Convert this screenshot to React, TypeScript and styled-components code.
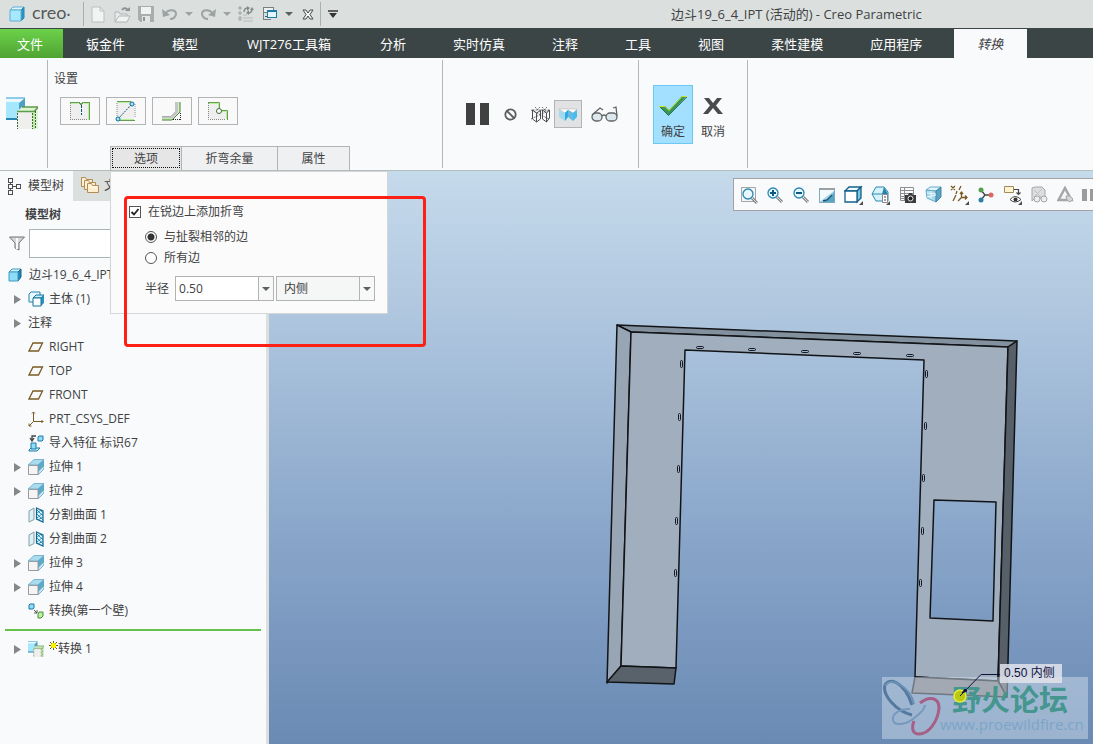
import React from "react";
import styled, { createGlobalStyle, css } from "styled-components";

const font = `"Open Sans", "Noto Sans CJK SC", sans-serif`;

const GlobalStyle = createGlobalStyle`
  * { box-sizing: border-box; }
  body {
    margin: 0;
    font-family: ${font};
    font-size: 12px;
    line-height: 20px;
    color: #3f4142;
    background: #f8fafc;
  }
  button, input, select {
    font: inherit;
    color: inherit;
    margin: 0;
    padding: 0;
    border-radius: 0;
  }
  svg { display: block; flex: none; }
`;

/* ---------- frame ---------- */

const Window = styled.div`
  min-height: 100vh;
  display: flex;
  flex-direction: column;
  overflow: hidden;
`;

const TitleBar = styled.header`
  height: 28px;
  display: flex;
  align-items: center;
  background: #dbe0df;
  padding-left: 9px;
`;

const Brand = styled.div`
  width: 74px;
  display: flex;
  align-items: center;
  gap: 7px;
  font-family: Lato, sans-serif;
  font-size: 18px;
  color: #55595a;
`;

const BrandName = styled.span`
  margin-top: -4px;
`;

const BarRule = styled.span`
  width: 1px;
  height: 24px;
  background: #a9b0af;
`;

const QuickTools = styled.div`
  display: flex;
  align-items: center;
  padding-left: 2px;
`;

const QuickButton = styled.button<{ $narrow?: boolean }>`
  width: ${(p) => (p.$narrow ? 14 : 24)}px;
  height: 24px;
  display: flex;
  align-items: center;
  justify-content: center;
  border: 0;
  background: none;
`;

const Title = styled.h1`
  flex: 1;
  margin: 0;
  padding-left: 326px;
  font-size: 13px;
  font-weight: 400;
  white-space: nowrap;
`;

const MenuBar = styled.nav`
  height: 30px;
  display: flex;
  padding-top: 1px;
  background: #3c4546;
`;

const MenuTab = styled.button<{ $kind?: "file" | "active"; $wide?: boolean }>`
  border: 0;
  min-width: ${(p) => (p.$wide ? 135 : 0)}px;
  padding: 0 24px 0 23px;
  font-size: 13px;
  white-space: nowrap;
  color: #fff;
  background: none;
  ${(p) =>
    p.$kind === "file" &&
    css`
      padding: 0 20px 0 17px;
      background: linear-gradient(#6cd14a, #4fa432);
    `}
  ${(p) =>
    p.$kind === "active" &&
    css`
      margin-left: 8px;
      color: #3f4142;
      font-style: italic;
      background: #f8fafc;
    `}
`;

/* ---------- ribbon ---------- */

const Ribbon = styled.section`
  height: 113px;
  display: flex;
  background: #f8fafc;
  border-bottom: 1px solid #b3bdbc;
`;

const RibbonRule = styled.span`
  width: 1px;
  margin: 2px 0;
  background: #b2b7b8;
`;

const FeatureCell = styled.div`
  width: 47px;
  padding: 39px 0 0 6px;
`;

const Settings = styled.div`
  width: 394px;
  display: flex;
  flex-direction: column;
  padding-top: 11px;
`;

const GroupLabel = styled.div`
  padding-left: 6px;
`;

const ModeButtons = styled.div`
  display: flex;
  gap: 6px;
  padding: 8px 0 0 12px;
`;

const ModeButton = styled.button`
  width: 40px;
  height: 28px;
  display: flex;
  align-items: center;
  justify-content: center;
  border: 1px solid #b3b3b3;
  background: #f9f9f9;
`;

const SubTabs = styled.div`
  position: relative;
  display: flex;
  height: 24px;
  margin: auto 0 0 62px;
`;

const SubTab = styled.button<{ $on?: boolean; $wide?: boolean }>`
  width: ${(p) => (p.$wide ? 96 : 72)}px;
  border: 1px solid #b3b3b3;
  border-bottom: 0;
  border-left-width: ${(p) => (p.$on ? 1 : 0)}px;
  background: ${(p) => (p.$on ? "#e6e6e7" : "#eff0f1")};
  outline: ${(p) => (p.$on ? "1px dotted #111" : "none")};
  outline-offset: -3px;
`;

const Controls = styled.div<{ $wide?: boolean }>`
  width: ${(p) => (p.$wide ? 195 : 108)}px;
  display: flex;
  align-items: center;
  padding-left: ${(p) => (p.$wide ? 20 : 14)}px;
`;

const ControlButton = styled.button<{ $on?: boolean; $w: number }>`
  width: ${(p) => p.$w}px;
  height: 28px;
  display: flex;
  align-items: center;
  justify-content: center;
  border: 1px solid ${(p) => (p.$on ? "#b3b3b3" : "transparent")};
  background: ${(p) => (p.$on ? "#e1e2e3" : "none")};
`;

const ActionButton = styled.button<{ $on?: boolean }>`
  width: 40px;
  height: 59px;
  display: flex;
  flex-direction: column;
  align-items: center;
  padding-top: 6px;
  gap: 2px;
  border: 1px solid ${(p) => (p.$on ? "#6cc8f5" : "transparent")};
  background: ${(p) => (p.$on ? "#a3dfff" : "none")};
`;

const ActionArt = styled.span`
  height: 28px;
  display: flex;
  align-items: center;
`;

/* ---------- options panel ---------- */

const OptionsPanel = styled.form`
  position: absolute;
  z-index: 2;
  top: 25px;
  left: 0;
  width: 278px;
  padding: 28px 0 12px 18px;
  border: 1px solid #d2d6d6;
  background: #fbfbfb;
`;

const Choice = styled.label<{ $nested?: boolean }>`
  height: ${(p) => (p.$nested ? 21 : 24)}px;
  margin-bottom: ${(p) => (p.$nested ? 0 : 2)}px;
  padding-left: ${(p) => (p.$nested ? 16 : 0)}px;
  display: flex;
  align-items: center;
  gap: 7px;
`;

const Tick = styled.input`
  appearance: none;
  width: 12px;
  height: 12px;
  border: 1px solid #555;
  background: #fff;
  &:checked {
    background: #fff
      url("data:image/svg+xml,%3Csvg xmlns='http://www.w3.org/2000/svg' viewBox='0 0 10 10'%3E%3Cpath d='M1.5 5l2.5 2.5L8.500 2' fill='none' stroke='%23222' stroke-width='1.800'/%3E%3C/svg%3E");
  }
`;

const Radio = styled.input`
  appearance: none;
  width: 12px;
  height: 12px;
  border: 1px solid #555;
  border-radius: 50%;
  background: #fff;
  &:checked {
    background: radial-gradient(circle, #333 3px, #fff 4px);
  }
`;

const RadiusRow = styled.div`
  display: flex;
  align-items: center;
  padding: 8px 0 0 16px;
`;

const Combo = styled.div<{ $flat?: boolean }>`
  position: relative;
  display: flex;
  width: 99px;
  height: 25px;
  margin-left: ${(p) => (p.$flat ? 2 : 6)}px;
  border: 1px solid #b3b3b3;
  background: ${(p) => (p.$flat ? "#f5f6f6" : "#fff")};
`;

const ComboInput = styled.input`
  flex: 1;
  min-width: 0;
  border: 0;
  padding-left: 3px;
  background: none;
`;

const ComboSelect = styled.select`
  appearance: none;
  flex: 1;
  border: 0;
  padding-left: 7px;
  background: none;
`;

const ComboArrow = styled.button`
  width: 15px;
  display: flex;
  align-items: center;
  justify-content: center;
  border: 0;
  border-left: 1px solid #b3b3b3;
  background: #f7f8f8;
  pointer-events: none;
`;

const RedMark = styled.div`
  position: absolute;
  z-index: 3;
  top: 50px;
  left: 14px;
  width: 302px;
  height: 151px;
  border: 3px solid #ff2015;
  border-radius: 4px;
  pointer-events: none;
`;

/* ---------- model tree ---------- */

const Body = styled.main`
  flex: 1;
  display: flex;
`;

const Side = styled.aside`
  width: 269px;
  flex: none;
  border-right: 3px solid #dbe0df;
  background: #f8fafc;
`;

const SideTabs = styled.div`
  display: flex;
  height: 30px;
`;

const SideTab = styled.button<{ $on?: boolean }>`
  flex: ${(p) => (p.$on ? "0 0 73px" : "1")};
  display: flex;
  align-items: center;
  gap: 4px;
  padding-left: 7px;
  border: 0;
  white-space: nowrap;
  background: ${(p) => (p.$on ? "none" : "#dbe0df")};
`;

const SideTitle = styled.h2`
  margin: 0;
  padding: 4px 0 4px 25px;
  font-size: 12px;
  line-height: 20px;
  font-weight: 700;
`;

const FilterRow = styled.div`
  display: flex;
  align-items: center;
  gap: 4px;
  padding: 0 8px 5px 9px;
`;

const FilterInput = styled.input`
  flex: 1;
  height: 29px;
  border: 1px solid #a9b5b4;
  background: #fff;
`;

const Tree = styled.ul`
  list-style: none;
  margin: 0;
  padding: 0;
`;

const TreeRow = styled.li<{ $level: number }>`
  height: 24px;
  display: flex;
  align-items: center;
  padding-left: ${(p) => (p.$level === 0 ? 8 : 13)}px;
  white-space: nowrap;
`;

const Twisty = styled.span`
  width: 15px;
  height: 16px;
  display: flex;
  align-items: center;
`;

const TreeIcon = styled.span`
  width: 16px;
  margin-right: 5px;
`;

const Badge = styled.span`
  padding-bottom: 7px;
`;

const InsertLine = styled.hr`
  height: 2px;
  margin: 6px 5px;
  border: 0;
  background: #66c04c;
`;

/* ---------- graphics area ---------- */

const Canvas = styled.section`
  position: relative;
  flex: 1;
  min-width: 0;
  overflow: hidden;
  background: linear-gradient(#c5daeb 0%, #b0c7df 24%, #8da9cc 59%, #6a8ab4 100%);
`;

const ViewBar = styled.div`
  position: relative;
  z-index: 1;
  width: 360px;
  height: 33px;
  margin: 7px 0 0 auto;
  display: flex;
  align-items: center;
  padding-left: 2px;
  border: 1px solid #a3a3a3;
  border-right: 0;
  background: #f8fafc;
  overflow: hidden;
`;

const ViewButton = styled.button<{ $menu?: boolean }>`
  flex: none;
  width: ${(p) => (p.$menu ? 27 : 26)}px;
  height: 26px;
  display: flex;
  align-items: center;
  justify-content: center;
  border: 0;
  background: none;
`;

const ModelDrawing = styled.svg`
  position: absolute;
  left: 0;
  top: 0;
`;

const Leader = styled.svg`
  position: absolute;
  z-index: 2;
  left: 683px;
  top: 499px;
`;

const Note = styled.div`
  position: absolute;
  z-index: 2;
  left: 731px;
  top: 493px;
  width: 62px;
  height: 19px;
  padding-left: 4px;
  font-family: "Liberation Sans", "Noto Sans CJK SC", sans-serif;
  line-height: 19px;
  white-space: nowrap;
  color: #10103c;
  background: rgba(226, 228, 236, 0.85);
`;

const Watermark = styled.div`
  position: absolute;
  z-index: 1;
  left: 613px;
  top: 506px;
  width: 206px;
  height: 62px;
  display: flex;
  color: #7ba5c8;
  background: rgba(206, 219, 234, 0.5);
`;

const WatermarkText = styled.div`
  display: flex;
  flex-direction: column;
  padding-top: 7px;
  font-size: 15px;
  line-height: 24px;
  white-space: nowrap;
  margin-left: -4px;
`;

const WatermarkName = styled.strong`
  padding-left: 12px;
  font-family: "Noto Sans CJK SC", sans-serif;
  font-size: 29px;
  line-height: 28px;
  color: #44968f;
`;

/* ---------- icons ---------- */

type Kids = { w: number; h?: number; children: React.ReactNode; crisp?: boolean };

const Svg = ({ w, h = w, children, crisp }: Kids) => (
  <svg
    width={w}
    height={h}
    viewBox={`0 0 ${w} ${h}`}
    fill="none"
    shapeRendering={crisp ? "crispEdges" : undefined}
    aria-hidden="true"
  >
    {children}
  </svg>
);

const Caret = ({ color = "#5b5f60" }: { color?: string }) => (
  <Svg w={8} h={4}><path d="M0 0h8L4 4z" fill={color} /></Svg>
);

const BrandCube = () => (
  <Svg w={16}>
    <path d="M1 4l3-3h11l-3 3z" fill="#dff6ff" stroke="#5fb0d3" />
    <path d="M12 4l3-3v11l-3 3z" fill="#2d93c0" stroke="#2a87b4" />
    <path d="M1 4h11v11H1z" fill="#a8e8ff" stroke="#5fb0d3" />
  </Svg>
);

const PartCube = () => (
  <Svg w={14}>
    <path d="M1 4l3-3h9l-3 3z" fill="#d7f3fd" stroke="#3f9cc4" />
    <path d="M10 4l3-3v8l-3 4z" fill="#2489b5" stroke="#14618a" />
    <path d="M1 4h9v9H1z" fill="#8fdcf8" stroke="#3f9cc4" />
  </Svg>
);

const NewIcon = () => (
  <Svg w={14} h={17}>
    <path d="M1 1h8l4 4v11H1z" fill="#f2f3f3" stroke="#bcc0c0" />
    <path d="M9 1v4h4" stroke="#bcc0c0" />
  </Svg>
);

const OpenIcon = () => (
  <Svg w={17} h={17}>
    <path d="M1 16V6h4l1 2h7v2" fill="#e8eaea" stroke="#b1b6b6" />
    <path d="M1 16l4-6h11l-3 6z" fill="#f1f2f2" stroke="#b1b6b6" />
    <path d="M8 4c2-3 5-2 6 1" stroke="#8e9494" strokeWidth="2" />
    <path d="M11 5h5V1z" fill="#8e9494" />
  </Svg>
);

const SaveIcon = () => (
  <Svg w={16} crisp>
    <path d="M0 0h16v16H2l-2-2z" fill="#a9adad" />
    <path d="M3 1h10v7H3z" fill="#f1f2f2" />
    <path d="M4 10h8v6H4z" fill="#e3e5e5" />
    <path d="M5 11h2v4H5z" fill="#8f9494" />
  </Svg>
);

const UndoIcon = ({ flip }: { flip?: boolean }) => (
  <Svg w={16} h={14}>
    <g transform={flip ? "translate(16 0) scale(-1 1)" : undefined}>
      <path d="M3 7c3-5 11-5 11 0 0 3-3 5-6 5" stroke="#9da2a2" strokeWidth="2" />
      <path d="M0 2l1 8 7-2z" fill="#9da2a2" />
    </g>
  </Svg>
);

const RegenIcon = () => (
  <Svg w={16}>
    <path d="M1 1h2v2H1zM1 6h2v2H1zM1 11h2v3H1z" stroke="#9da2a2" />
    <path d="M5 9h4M5 12h10M5 15h10" stroke="#b7bbbb" />
    <path d="M6 6c0-3 1-4 4-4M14 3c0 3-1 4-4 4" stroke="#858b8b" strokeWidth="1.500" />
    <path d="M9 0l3 2-3 3zM11 4l-3 3 3 2zM12 4l2-3 2 3z" fill="#858b8b" />
  </Svg>
);

const WindowsIcon = () => (
  <Svg w={16} crisp>
    <path d="M1.500 1.500h10v5h-10z" fill="#eef0f0" stroke="#7b7f80" />
    <path d="M1.500 7v6.500h7" stroke="#7b7f80" />
    <path d="M5.500 4.500h9v7h-9z" fill="#e4f6ff" stroke="#1c7ba8" />
    <path d="M5 5h10" stroke="#1c7ba8" strokeWidth="2" />
    <path d="M3 10.500h2" stroke="#55595a" />
  </Svg>
);

const CloseBoxIcon = () => (
  <Svg w={12} h={11}>
    <path d="M1 1h3l2 3 2-3h3L8 5.500 11 10H8L6 7l-2 3H1l3-4.500z" fill="#f3f4f4" stroke="#444a4b" />
  </Svg>
);

const CustomizeIcon = () => (
  <Svg w={10} h={8}>
    <path d="M0 1h10" stroke="#333" strokeWidth="1.500" />
    <path d="M1 3h8L5 8z" fill="#333" />
  </Svg>
);

const ConvertIcon = ({ size = 32 }: { size?: number }) => (
  <svg width={size} height={size} viewBox="0 0 32 32" fill="none" aria-hidden="true">
    <path d="M0 5l2-4h17l-6 5H0z" fill="#eaf9ff" />
    <path d="M0 1h19" stroke="#8ecbe6" strokeWidth="2" />
    <path d="M0 5h13v17H0z" fill="#a5e7fd" />
    <path d="M13 6l6-5v10l-6 6z" fill="#4d9fc6" />
    <path d="M0 22h12" stroke="#2585b3" strokeWidth="2" />
    <path d="M11 15l5-5h16v22H11z" fill="#efefed" />
    <path d="M11 15l5-5h16v1l-4 3H11z" fill="#ddf5d0" />
    <path d="M27 15l5-4v21h-5z" fill="#e3f3da" />
    <path d="M16 10h16M11 14.500h17l4-4" stroke="#5c9a4c" strokeWidth="1.500" />
    <path d="M28 15v17" stroke="#a4ec80" strokeWidth="1.500" />
    <path d="M11.500 16v16M26.500 16v16M29.500 14v18" stroke="#46633d" strokeDasharray="2 1" />
  </svg>
);

const RipEdgeIcon = () => (
  <Svg w={22} h={20} crisp>
    <path d="M1 2h19v17H1z" fill="#eeefee" />
    <path d="M1.500 2v16.500h17" stroke="#888" strokeDasharray="1 1" />
    <path d="M1 1.500h9l2 2 2-2h6.500V19" stroke="#679b57" />
    <path d="M2 2.500h7M15 2.500h4.500V19" stroke="#b4f09a" />
    <path d="M12.500 4v10" stroke="#11556f" strokeDasharray="3 1" />
  </Svg>
);

const RipConnectIcon = () => (
  <Svg w={22} h={22}>
    <path d="M2 2h17v17H2z" fill="#eeefee" />
    <path d="M2 3v14M20 4v14" stroke="#888" strokeDasharray="1 1" />
    <path d="M2 1.500h14M4 20.500h16" stroke="#679b57" />
    <path d="M3 2.500h12M5 19.500h14" stroke="#b4f09a" />
    <path d="M3 19L16 5" stroke="#11556f" strokeDasharray="2 1" />
    <circle cx="17" cy="4" r="2" fill="#a7e5ff" stroke="#136b93" />
    <circle cx="3" cy="19" r="2" fill="#a7e5ff" stroke="#136b93" />
  </Svg>
);

const EdgeBendIcon = () => (
  <Svg w={20} h={20}>
    <path d="M0 15.500h9l5-5V1" stroke="#8d8e8e" />
    <path d="M0 16.500h10l5-5V1" stroke="#c4c5c5" strokeWidth="2" />
    <path d="M0 18h11l6-6V1" stroke="#a4e985" />
    <path d="M18 1v10l-8 8H0" stroke="#4b7c3b" />
    <path d="M18.500 12v7M11 18.500h8" stroke="#222" strokeDasharray="1 1" />
  </Svg>
);

const CornerReliefIcon = () => (
  <Svg w={22} h={20}>
    <path d="M1 2h11v8h8v8H1z" fill="#eeefee" />
    <path d="M1.500 2v16.500H19" stroke="#888" strokeDasharray="1 1" />
    <path d="M1 1.500h11.500V8M14 9.500h6.500V19" stroke="#679b57" />
    <path d="M2 2.500h9.500V8M14 10.500h5.500V18" stroke="#b4f09a" />
    <circle cx="12" cy="10" r="2.500" fill="#fff" stroke="#456b3b" />
  </Svg>
);

const PauseIcon = () => (
  <Svg w={23} h={22} crisp><path d="M0 0h9v22H0zM14 0h9v22h-9z" fill="#404040" /></Svg>
);

const NoPreviewIcon = () => (
  <Svg w={13}>
    <circle cx="6.500" cy="6.500" r="5.200" stroke="#5b5d5e" strokeWidth="1.800" />
    <path d="M3 3l7 7" stroke="#5b5d5e" strokeWidth="1.800" />
  </Svg>
);

const WireIcon = () => (
  <Svg w={24} h={17}>
    <g stroke="#4d4f50">
      <path d="M2.500 4l4 3v9l-4-3zM6.500 7l5-3M12.500 4l4 3v9l-4-3zM16.500 7l3-3v8l-3 4M6.500 16l4-3V5" />
      <path d="M2.500 4h17M5 1l3 3M10 1L7 4M12 1l4 4M17 1l-4 4M1 13l19-9M1 4l18 9" strokeDasharray="2 1" strokeWidth=".8" />
    </g>
  </Svg>
);

const SolidIcon = () => (
  <Svg w={18} h={13}>
    <path d="M0 1h18l-4 4-5-3-3 3z" fill="#fff" stroke="#b5b5b5" strokeWidth=".6" />
    <path d="M0 2l6 3v8L0 9z" fill="#a5d9ef" />
    <path d="M6 5l3-3v7l-3 4z" fill="#25aee9" />
    <path d="M9 2l5 3v8L9 9z" fill="#68b9df" />
    <path d="M14 5l4-3v7l-4 4z" fill="#46bdf0" />
  </Svg>
);

const GlassesIcon = () => (
  <Svg w={27} h={16}>
    <rect x="1" y="7" width="10" height="8" rx="4" fill="#dce7ee" stroke="#606466" strokeWidth="1.300" />
    <rect x="15" y="7" width="11" height="8" rx="4" fill="#dce7ee" stroke="#606466" strokeWidth="1.300" />
    <path d="M11 10q2-2 4 0M1 9l8-7 3 2M26 10l-1-9-3 1" stroke="#606466" strokeWidth="1.300" />
  </Svg>
);

const CheckIcon = () => (
  <Svg w={28} h={20}>
    <path d="M0 10h6l4 4L23 0h5L9.500 19.500z" fill="#35955b" />
    <path d="M0 10.500h6l4 4L23 .5h5" stroke="#cde21d" />
    <path d="M28 1L9.500 19.500 1 11" stroke="#1d5d38" strokeWidth=".8" />
  </Svg>
);

const CancelIcon = () => (
  <Svg w={20} h={18}>
    <path d="M1 1h5l4 5 4-5h5l-6 7.500L20 17h-5l-5-6-5 6H0l7-8.500z" fill="#4b4b4b" />
  </Svg>
);

const TreeTabIcon = () => (
  <Svg w={17} h={19} crisp>
    <path d="M1.500 1.500h4v4h-4zM1.500 7.500h4v4h-4zM1.500 13.500h4v4h-4zM9.500 7.500h4v4h-4zM3.500 6v1M3.500 12v1M6 9.500h3" stroke="#4b4d4e" />
  </Svg>
);

const FoldersIcon = () => (
  <Svg w={20} h={20}>
    {[0, 3, 6].map((d) => (
      <g key={d} transform={`translate(${d} ${d})`}>
        <path d="M1.500 10.500v-9h4l1 2h6v7z" fill="#fdeed0" stroke="#b18c55" />
        <path d="M2 5h9" stroke="#fffaf0" />
      </g>
    ))}
  </Svg>
);

const FunnelIcon = () => (
  <Svg w={16} h={15}>
    <path d="M.5 1h15L10 7v7l-4-2V7z" fill="#d5d7d8" stroke="#707273" />
    <path d="M8 2v11" stroke="#fafafa" strokeWidth="2" />
  </Svg>
);

const TwistyIcon = () => <Svg w={8} h={9}><path d="M1 0l7 4.500L1 9z" fill="#858788" /></Svg>;

const BodiesIcon = () => (
  <Svg w={16}>
    <path d="M1 3l2-2h9v8l-2 2H1z" fill="#e9f8ff" stroke="#2583af" />
    <path d="M5 7l3-3h8l-3 3z" fill="#c3edfb" stroke="#17719d" />
    <path d="M13 7l3-3v8l-3 3z" fill="#2c92be" />
    <path d="M5 7h8v8H5z" fill="#fff" stroke="#17719d" />
  </Svg>
);

const PlaneIcon = () => <Svg w={16}><path d="M5 4h9.500l-4 8H1z" stroke="#7a5a22" strokeWidth="1.300" /></Svg>;

const CsysIcon = () => (
  <Svg w={16}>
    <path d="M5.500 1v9.500H15M5.500 10.500L1 15M4 2.500l1.500-1.500L7 2.500M13.500 9l1.500 1.500-1.500 1.500M1 12.500V15h2.500" stroke="#7a5a22" />
  </Svg>
);

const ImportIcon = () => (
  <Svg w={16} h={17}>
    <path d="M10 2l1-1h4v4l-1 1h-4z" fill="#8fdcf8" stroke="#1c7ba8" />
    <path d="M8 1H4v4M2 3l2 3 2-3" stroke="#444" strokeWidth="1.300" />
    <path d="M1 15l2-2h9l-3 3H1z" fill="#c6effc" stroke="#1c7ba8" />
    <path d="M3 8h5v6H3z" fill="#8fdcf8" stroke="#1c7ba8" />
  </Svg>
);

const ExtrudeIcon = () => (
  <Svg w={16}>
    <path d="M0 6l6-5.500h10L10 6z" fill="#a9dcf0" stroke="#6aa7c2" strokeWidth=".8" />
    <path d="M10 6l6-5.500v9.500L10 16z" fill="#c3e6f3" stroke="#6aa7c2" strokeWidth=".8" />
    <path d="M10 6l6-5v6l-6 6z" fill="#5fa7c6" />
    <path d="M.5 6.500H10v9H.5z" fill="#f4f4f4" stroke="#9a9a9a" />
  </Svg>
);

const SplitIcon = () => (
  <Svg w={16}>
    <path d="M1 4l5-3v11.500L1 15z" fill="#d9f2fb" stroke="#8b9ba2" />
    <path d="M8.500 1l6.500 3v11l-6.500-3z" fill="#d5f3fd" stroke="#13688f" strokeWidth="1.200" />
    <path d="M9 3l6 6M9 7l6 6M11 2l4 4M15 6l-6 5M15 10l-5 3M13 3L9 6" stroke="#2b87ae" strokeWidth=".9" />
  </Svg>
);

const FirstWallIcon = () => (
  <Svg w={16}>
    <path d="M1 2l1-1h4v4L5 6H1z" fill="#8fdcf8" stroke="#1c7ba8" />
    <path d="M6 7l3 3M9 7v3H6" stroke="#555" />
    <path d="M10 11l1-2h4v4l-2 2h-3z" fill="#b9f29b" stroke="#4b8b38" />
  </Svg>
);

const SparkIcon = () => (
  <Svg w={9}>
    <path d="M4.500 0v9M0 4.500h9M1 1l7 7M8 1L1 8" stroke="#555412" />
    <circle cx="4.500" cy="4.500" r="2.700" fill="#fff200" />
  </Svg>
);

const Corner = () => <path d="M19 16v4h-4z" fill="#4b4d4e" />;

const Lens = ({ plus, minus }: { plus?: boolean; minus?: boolean }) => (
  <>
    <path d="M11 11l5 5" stroke="#858789" strokeWidth="3" />
    <path d="M11 11l5 5" stroke="#d9dbdc" />
    <circle cx="7" cy="7" r="5" fill="#e6f7ff" stroke="#2a86b2" strokeWidth="1.300" />
    {(plus || minus) && <path d="M4 7h6" stroke="#10587f" strokeWidth="2" />}
    {plus && <path d="M7 4v6" stroke="#10587f" strokeWidth="2" />}
  </>
);

const viewIcons: { label: string; menu?: boolean; art: React.ReactNode }[] = [
  {
    label: "重新调整",
    art: (
      <Svg w={18}>
        <path d="M1.500 1.500h14v14h-14z" fill="#f5f6f6" stroke="#a3a5a6" />
        <g transform="translate(1 1)"><Lens /></g>
      </Svg>
    ),
  },
  { label: "放大", art: <Svg w={18}><Lens plus /></Svg> },
  { label: "缩小", art: <Svg w={18}><Lens minus /></Svg> },
  {
    label: "重画",
    art: (
      <Svg w={16}>
        <path d="M0 1h16v15H0z" fill="#a6d3e8" />
        <path d="M0 3h16L3 13l-3 2z" fill="#f4f9fc" />
        <path d="M0 1h16v2H0z" fill="#9da0a1" />
        <path d="M16 3v13H2C9 13 13 9 16 3z" fill="#5aa4c6" />
        <path d="M4 14l4-1 5-5" stroke="#14506e" strokeWidth="1.300" />
        <path d="M.5 1v14.500h15V1" stroke="#7fa9bd" />
      </Svg>
    ),
  },
  {
    label: "显示样式",
    menu: true,
    art: (
      <Svg w={20}>
        <path d="M1 6l4-4h12l-4 4z" fill="#eefaff" stroke="#14618a" strokeWidth="1.300" />
        <path d="M13 6l4-4v11l-4 4z" fill="#7fc4e0" stroke="#14618a" strokeWidth="1.300" />
        <path d="M1 6h12v11H1z" fill="#fff" stroke="#14618a" strokeWidth="1.300" />
        <Corner />
      </Svg>
    ),
  },
  {
    label: "已保存方向",
    menu: true,
    art: (
      <Svg w={20}>
        <path d="M1 9l4-7h8l4 5v9H5z" fill="#d6f3fd" stroke="#2b8ab4" />
        <path d="M1 9h10" stroke="#2b8ab4" />
        <path d="M13 2l4 7h-6z" fill="#2583ac" />
        <path d="M11.500 9.500h5v8h-5z" fill="#fff" stroke="#888" />
        <path d="M13 12h2M13 15h2" stroke="#444" />
        <Corner />
      </Svg>
    ),
  },
  {
    label: "视图管理器",
    art: (
      <Svg w={17}>
        <path d="M1.500 1.500h13v13h-13zM1.500 4.500h13M1.500 7.500h13M1.500 10.500H7M1.500 12.500H7M5.500 1v14" stroke="#8b8d8e" />
        <path d="M6 9h3l1-2h3l1 2h3v8H6z" fill="#393b3c" />
        <circle cx="11.500" cy="12.500" r="2.500" fill="#222" stroke="#e5e7e8" />
      </Svg>
    ),
  },
  {
    label: "透视图",
    art: (
      <Svg w={17}>
        <path d="M1 4l4-3h11l-5 4z" fill="#e3f5fc" stroke="#6aabc6" />
        <path d="M1 4l10 1v11L2 12z" fill="#a8d8eb" stroke="#6aabc6" />
        <path d="M11 5l5-4v10l-5 5z" fill="#5aa1c2" stroke="#3f86a8" />
        <path d="M2 11l9-2M6 5v8M2 7l9 1" stroke="#e9f8fd" />
      </Svg>
    ),
  },
  {
    label: "基准显示过滤器",
    menu: true,
    art: (
      <Svg w={20}>
        <path d="M1 1l4 4M5 1L1 5M11 1L9 5M6 10l-3 6M11.500 8v4.500H17M11.500 12.500L8 16M10 9l1.500-2L13 9M15 10.500l2 2-2 2M7 6L6 9" stroke="#7a5a22" strokeWidth="1.300" />
        <Corner />
      </Svg>
    ),
  },
  {
    label: "旋转中心",
    art: (
      <Svg w={16}>
        <path d="M3 3l4 5h7M7 8l-4 5" stroke="#3e4446" strokeWidth="1.300" />
        <circle cx="3" cy="3" r="2.500" fill="#54a04a" />
        <circle cx="13" cy="8" r="2.500" fill="#dd6660" />
        <circle cx="3" cy="13" r="2.500" fill="#2d7fa8" />
      </Svg>
    ),
  },
  {
    label: "注释显示",
    menu: true,
    art: (
      <Svg w={20}>
        <path d="M1.500 1.500h9v6h-9z" fill="#fff3d0" stroke="#a08a5a" />
        <path d="M11 4.500h4.500V9M13.500 7.500l2 2 2-2" stroke="#444" strokeWidth="1.200" />
        <path d="M7 14.500q5-6 11 0-6 5-11 0z" fill="#fff" stroke="#444" />
        <circle cx="12.500" cy="14.500" r="2" fill="#333" />
        <Corner />
      </Svg>
    ),
  },
  {
    label: "仿真查询",
    art: (
      <Svg w={17}>
        <path d="M1 2l3-1h7l3 3v8H4l-3 3z" fill="#dcdede" stroke="#a4a7a8" />
        <path d="M3 4l8 8M11 3l-8 8" stroke="#bfc2c3" />
        <circle cx="6" cy="13" r="3" fill="#eceded" stroke="#a4a7a8" />
        <circle cx="13" cy="13" r="3" fill="#eceded" stroke="#a4a7a8" />
      </Svg>
    ),
  },
  {
    label: "应力显示",
    art: (
      <Svg w={17}>
        <path d="M8 2l6.500 12h-13z" stroke="#a4a7a8" strokeWidth="2.500" fill="#f4f5f5" />
        <path d="M9 10h4l3 3-3 3-3-2z" fill="#d5d7d8" stroke="#a4a7a8" />
      </Svg>
    ),
  },
  { label: "暂停仿真", art: <Svg w={18} h={12}><path d="M0 0h5v12H0zM8 0h5v12H8z" fill="#999b9c" /></Svg> },
];

const topHoles = [[700, 348], [752, 350], [805, 352], [857, 354], [910, 356]];
const sideHoles = [
  [682, 364], [680, 417], [679, 469], [677, 521], [676, 573],
  [927, 374], [926, 426], [924, 478], [923, 531], [921, 583],
];

const Model = () => (
  <ModelDrawing width="824" height="573" viewBox="269 171 824 573" fill="none" role="img" aria-label="钣金件模型">
    <g stroke="#111417" strokeWidth="1.500" strokeLinejoin="round">
      <path d="M617 325L1017 341 1008 347 631 332z" fill="#83909d" />
      <path d="M617 325L631 332 621 666 607 683z" fill="#98a5b5" />
      <path
        fillRule="evenodd"
        d="M631 332L1008 347 998 681 915 677 924 360 685 350 676 668 621 666zM934 500L996 502 993 621 930 618z"
        fill="#a1aebe"
      />
      <path d="M621 666L676 668 674 684 607 682z" fill="#59616b" />
      <path d="M1017 341L1008 347 998 681 1007 697z" fill="#575f69" />
      <path d="M915 677L998 681 1007 697 912 693z" fill="#79767c" />
    </g>
    <g stroke="#111827">
      {topHoles.map(([x, y]) => <rect key={x} x={x - 3.5} y={y - 1.5} width="7" height="2" rx="1" />)}
      {sideHoles.map(([x, y]) => <rect key={`${x}-${y}`} x={x - 1.5} y={y - 3.5} width="2" height="7" rx="1" />)}
    </g>
  </ModelDrawing>
);

const tree: { text: string; icon: React.ReactNode; open?: boolean; flush?: boolean }[] = [
  { text: "主体 (1)", icon: <BodiesIcon />, open: true },
  { text: "注释", icon: null, open: true, flush: true },
  { text: "RIGHT", icon: <PlaneIcon /> },
  { text: "TOP", icon: <PlaneIcon /> },
  { text: "FRONT", icon: <PlaneIcon /> },
  { text: "PRT_CSYS_DEF", icon: <CsysIcon /> },
  { text: "导入特征 标识67", icon: <ImportIcon /> },
  { text: "拉伸 1", icon: <ExtrudeIcon />, open: true },
  { text: "拉伸 2", icon: <ExtrudeIcon />, open: true },
  { text: "分割曲面 1", icon: <SplitIcon /> },
  { text: "分割曲面 2", icon: <SplitIcon /> },
  { text: "拉伸 3", icon: <ExtrudeIcon />, open: true },
  { text: "拉伸 4", icon: <ExtrudeIcon />, open: true },
  { text: "转换(第一个壁)", icon: <FirstWallIcon /> },
];

const menus = ["钣金件", "模型", "WJT276工具箱", "分析", "实时仿真", "注释", "工具", "视图", "柔性建模", "应用程序"];

export default function App() {
  return (
    <Window>
      <GlobalStyle />
      <TitleBar>
        <Brand>
          <BrandCube />
          <BrandName>creo<small>·</small></BrandName>
        </Brand>
        <BarRule />
        <QuickTools>
          <QuickButton aria-label="新建"><NewIcon /></QuickButton>
          <QuickButton aria-label="打开"><OpenIcon /></QuickButton>
          <QuickButton aria-label="保存"><SaveIcon /></QuickButton>
          <QuickButton aria-label="撤消"><UndoIcon /></QuickButton>
          <QuickButton $narrow aria-label="撤消列表"><Caret color="#9da2a2" /></QuickButton>
          <QuickButton aria-label="重做"><UndoIcon flip /></QuickButton>
          <QuickButton $narrow aria-label="重做列表"><Caret color="#9da2a2" /></QuickButton>
          <QuickButton aria-label="重新生成"><RegenIcon /></QuickButton>
          <QuickButton aria-label="窗口"><WindowsIcon /></QuickButton>
          <QuickButton $narrow aria-label="窗口列表"><Caret /></QuickButton>
          <QuickButton aria-label="关闭"><CloseBoxIcon /></QuickButton>
        </QuickTools>
        <BarRule />
        <QuickButton aria-label="自定义"><CustomizeIcon /></QuickButton>
        <Title>边斗19_6_4_IPT (活动的) - Creo Parametric</Title>
      </TitleBar>

      <MenuBar>
        <MenuTab $kind="file">文件</MenuTab>
        {menus.map((m) => <MenuTab key={m} $wide={m.length > 5}>{m}</MenuTab>)}
        <MenuTab $kind="active">转换</MenuTab>
      </MenuBar>

      <Ribbon>
        <FeatureCell><ConvertIcon /></FeatureCell>
        <RibbonRule />
        <Settings>
          <GroupLabel>设置</GroupLabel>
          <ModeButtons>
            <ModeButton aria-label="边扯裂"><RipEdgeIcon /></ModeButton>
            <ModeButton aria-label="扯裂连接"><RipConnectIcon /></ModeButton>
            <ModeButton aria-label="边折弯"><EdgeBendIcon /></ModeButton>
            <ModeButton aria-label="拐角止裂槽"><CornerReliefIcon /></ModeButton>
          </ModeButtons>
          <SubTabs>
            <SubTab $on>选项</SubTab>
            <SubTab $wide>折弯余量</SubTab>
            <SubTab>属性</SubTab>
            <OptionsPanel>
              <Choice><Tick type="checkbox" defaultChecked />在锐边上添加折弯</Choice>
              <Choice $nested><Radio type="radio" name="edges" defaultChecked />与扯裂相邻的边</Choice>
              <Choice $nested><Radio type="radio" name="edges" />所有边</Choice>
              <RadiusRow>
                <label htmlFor="radius">半径</label>
                <Combo>
                  <ComboInput id="radius" defaultValue="0.50" />
                  <ComboArrow type="button" aria-label="半径列表"><Caret /></ComboArrow>
                </Combo>
                <Combo $flat>
                  <ComboSelect aria-label="半径侧"><option>内侧</option></ComboSelect>
                  <ComboArrow as="span"><Caret /></ComboArrow>
                </Combo>
              </RadiusRow>
            </OptionsPanel>
            <RedMark />
          </SubTabs>
        </Settings>
        <RibbonRule />
        <Controls $wide>
          <ControlButton $w={28} aria-label="暂停"><PauseIcon /></ControlButton>
          <ControlButton $w={39} aria-label="无预览"><NoPreviewIcon /></ControlButton>
          <ControlButton $w={24} aria-label="分离预览"><WireIcon /></ControlButton>
          <ControlButton $w={28} $on aria-label="连接预览"><SolidIcon /></ControlButton>
          <ControlButton $w={44} aria-label="校验"><GlassesIcon /></ControlButton>
        </Controls>
        <RibbonRule />
        <Controls>
          <ActionButton $on><ActionArt><CheckIcon /></ActionArt>确定</ActionButton>
          <ActionButton><ActionArt><CancelIcon /></ActionArt>取消</ActionButton>
        </Controls>
        <RibbonRule />
      </Ribbon>

      <Body>
        <Side>
          <SideTabs>
            <SideTab $on><TreeTabIcon />模型树</SideTab>
            <SideTab><FoldersIcon />文件夹浏览器</SideTab>
          </SideTabs>
          <SideTitle>模型树</SideTitle>
          <FilterRow>
            <FunnelIcon />
            <FilterInput aria-label="过滤" />
          </FilterRow>
          <Tree>
            <TreeRow $level={0}><TreeIcon><PartCube /></TreeIcon>边斗19_6_4_IPT</TreeRow>
            {tree.map((t) => (
              <TreeRow key={t.text} $level={1}>
                <Twisty>{t.open && <TwistyIcon />}</Twisty>
                {!t.flush && <TreeIcon>{t.icon}</TreeIcon>}
                {t.text}
              </TreeRow>
            ))}
          </Tree>
          <InsertLine />
          <Tree>
            <TreeRow $level={1}>
              <Twisty><TwistyIcon /></Twisty>
              <TreeIcon><ConvertIcon size={16} /></TreeIcon>
              <Badge><SparkIcon /></Badge>转换 1
            </TreeRow>
          </Tree>
        </Side>
        <Canvas>
          <ViewBar>
            {viewIcons.map((v) => (
              <ViewButton key={v.label} $menu={v.menu} aria-label={v.label}>{v.art}</ViewButton>
            ))}
          </ViewBar>
          <Model />
          <Watermark>
            <Svg w={62}>
              <path d="M30 28C22 4 7 0 3 8c-3 10 11 26 27 30" stroke="#54799f" strokeWidth="3" />
              <path d="M3 9C5 4 11 4 17 7c7 4 13 11 15 20" stroke="#6b90b4" strokeWidth="2" />
              <path d="M38 26c10-8 19-5 19 5-1 13-10 26-20 26-6 0-8-5-5-13" stroke="#a65f86" strokeWidth="3" />
              <path d="M28 32c-11 0-18 5-17 11s12 5 20-1 12-10 12-14" stroke="#7599bd" strokeWidth="2" />
            </Svg>
            <WatermarkText>
              <WatermarkName>野火论坛</WatermarkName>
              www.proewildfire.cn
            </WatermarkText>
          </Watermark>
          <Leader width="50" height="36" viewBox="0 0 50 36" fill="none" aria-hidden="true">
            <circle cx="8" cy="26" r="6" fill="#b9c814" stroke="#e6ee3d" strokeWidth="1.500" />
            <path d="M8 26L29 4.500h20" stroke="#10103c" />
            <path d="M10 23l3-4 2 2z" fill="#10103c" stroke="#10103c" />
          </Leader>
          <Note>0.50 内侧</Note>
        </Canvas>
      </Body>
    </Window>
  );
}
